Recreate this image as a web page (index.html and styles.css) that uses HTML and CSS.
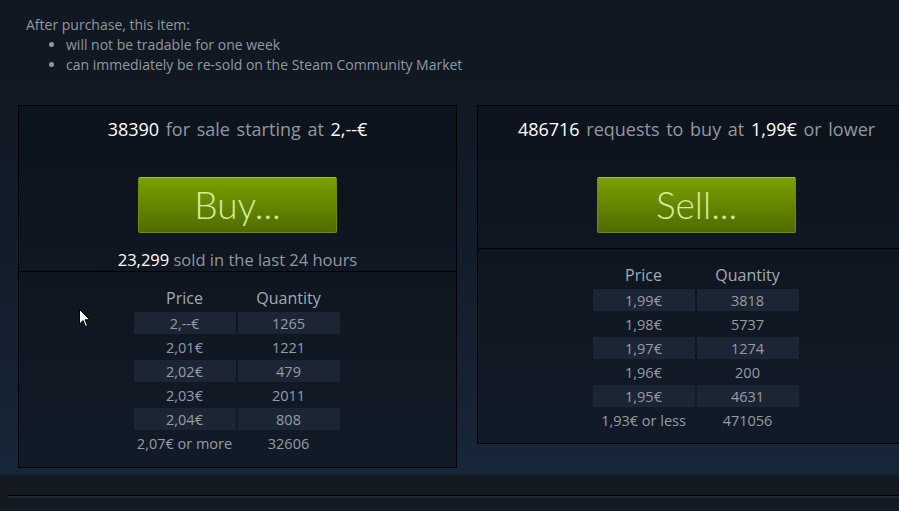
FILE: index.html
```html
<!DOCTYPE html>
<html>
<head>
<meta charset="utf-8">
<link rel="stylesheet" href="styles.css">
</head>
<body>
<div class="page">
  <div class="notice">
    <div>After purchase, this item:</div>
    <ul>
      <li>will not be tradable for one week</li>
      <li>can immediately be re-sold on the Steam Community Market</li>
    </ul>
  </div>
  <div class="market">
    <div class="box">
      <div class="box-top">
        <div class="heading"><span class="hl">38390</span> for sale starting at <span class="hl">2,--€</span></div>
        <a class="btn">Buy...</a>
        <div class="sold"><span class="hl">23,299</span> sold in the last 24 hours</div>
      </div>
      <div class="box-body">
        <table class="orders">
          <tr><th>Price</th><th>Quantity</th></tr>
          <tr class="alt"><td>2,--€</td><td>1265</td></tr>
          <tr><td>2,01€</td><td>1221</td></tr>
          <tr class="alt"><td>2,02€</td><td>479</td></tr>
          <tr><td>2,03€</td><td>2011</td></tr>
          <tr class="alt"><td>2,04€</td><td>808</td></tr>
          <tr><td>2,07€ or more</td><td>32606</td></tr>
        </table>
      </div>
    </div>
    <div class="box">
      <div class="box-top short">
        <div class="heading"><span class="hl">486716</span> requests to buy at <span class="hl">1,99€</span> or lower</div>
        <a class="btn">Sell...</a>
      </div>
      <div class="box-body short">
        <table class="orders">
          <tr><th>Price</th><th>Quantity</th></tr>
          <tr class="alt"><td>1,99€</td><td>3818</td></tr>
          <tr><td>1,98€</td><td>5737</td></tr>
          <tr class="alt"><td>1,97€</td><td>1274</td></tr>
          <tr><td>1,96€</td><td>200</td></tr>
          <tr class="alt"><td>1,95€</td><td>4631</td></tr>
          <tr><td>1,93€ or less</td><td>471056</td></tr>
        </table>
      </div>
    </div>
  </div>
  <div class="footer-gap"></div>
  <div class="rule"></div>
  <svg class="cursor" width="12" height="19" viewBox="0 0 12 19"><path d="M0.5 0.5 L0.5 15 L4 11.5 L6.5 17.5 L8.5 16.6 L6 10.8 L10.8 10.8 Z" fill="#fff" stroke="#000" stroke-width="1"/></svg>
</div>
</body>
</html>
```

FILE: styles.css
```css
html, body {
  margin: 0;
  padding: 0;
  background: #141a22;
  overflow: hidden;
}
body {
  font-family: "Open Sans", "Noto Sans", Arial, sans-serif;
  color: #8f98a0;
  width: 899px;
  height: 511px;
}
.page {
  position: relative;
  width: 899px;
  height: 511px;
  overflow: hidden;
}
.notice {
  background: #111822;
  padding: 15px 0 0 26px;
  font-size: 14px;
  line-height: 20px;
  height: 70px;
  box-sizing: border-box;
}
.notice ul {
  margin: 0;
  padding-left: 40px;
}
.market {
  display: flex;
  gap: 20px;
  padding: 35px 0 7px 18px;
  width: 940px;
  background: linear-gradient(to bottom, #111822 0%, #121c2a 40%, #172639 100%);
}
.box {
  width: 437px;
  flex: none;
  border: 1px solid #000;
  align-self: flex-start;
  background: #0e141d;
}
.box-top {
  text-align: center;
  padding-top: 11px;
  border-bottom: 1px solid #000;
  background: linear-gradient(to bottom, #0d131c, #0f1722);
}
.box-top.short {
  padding-bottom: 15px;
}
.heading {
  font-size: 18px;
  line-height: 24px;
  word-spacing: 2px;
}
.hl {
  color: #fff;
}
.btn {
  display: block;
  width: 197px;
  height: 54px;
  margin: 36px auto 0;
  border: 1px solid #6f8f00;
  border-top-color: #a3c616;
  border-radius: 2px;
  background: linear-gradient(to bottom, #7ba003 0%, #4e6c00 100%);
  color: #d5ee95;
  font-family: Lato, "Open Sans", sans-serif;
  font-weight: 300;
  font-size: 37px;
  line-height: 54px;
  text-align: center;
}
.sold {
  margin-top: 16px;
  font-size: 16.5px;
  line-height: 22px;
}
.box-body {
  padding: 12px 0 11px;
  background: linear-gradient(to bottom, #0f1620 0%, #111b27 100%);
}
.box-body.short {
  padding-bottom: 10px;
}
.orders {
  margin: 0 auto;
  border-collapse: separate;
  border-spacing: 2px;
  font-size: 14.5px;
  position: relative;
  left: -1px;
}
.orders th {
  font-weight: normal;
  color: #a2aab3;
  font-size: 16px;
  height: 24px;
  width: 102px;
  padding: 0;
}
.orders td {
  height: 22px;
  padding: 0;
  text-align: center;
  color: #949ca5;
}
.orders tr.alt td {
  background: #1c2533;
}
.footer-gap {
  height: 20px;
  background: #141a21;
}
.rule {
  margin-left: 8px;
  height: 1px;
  background: #000;
  border-bottom: 2px solid #1d2633;
}
.cursor {
  position: absolute;
  left: 79px;
  top: 309px;
}
```
